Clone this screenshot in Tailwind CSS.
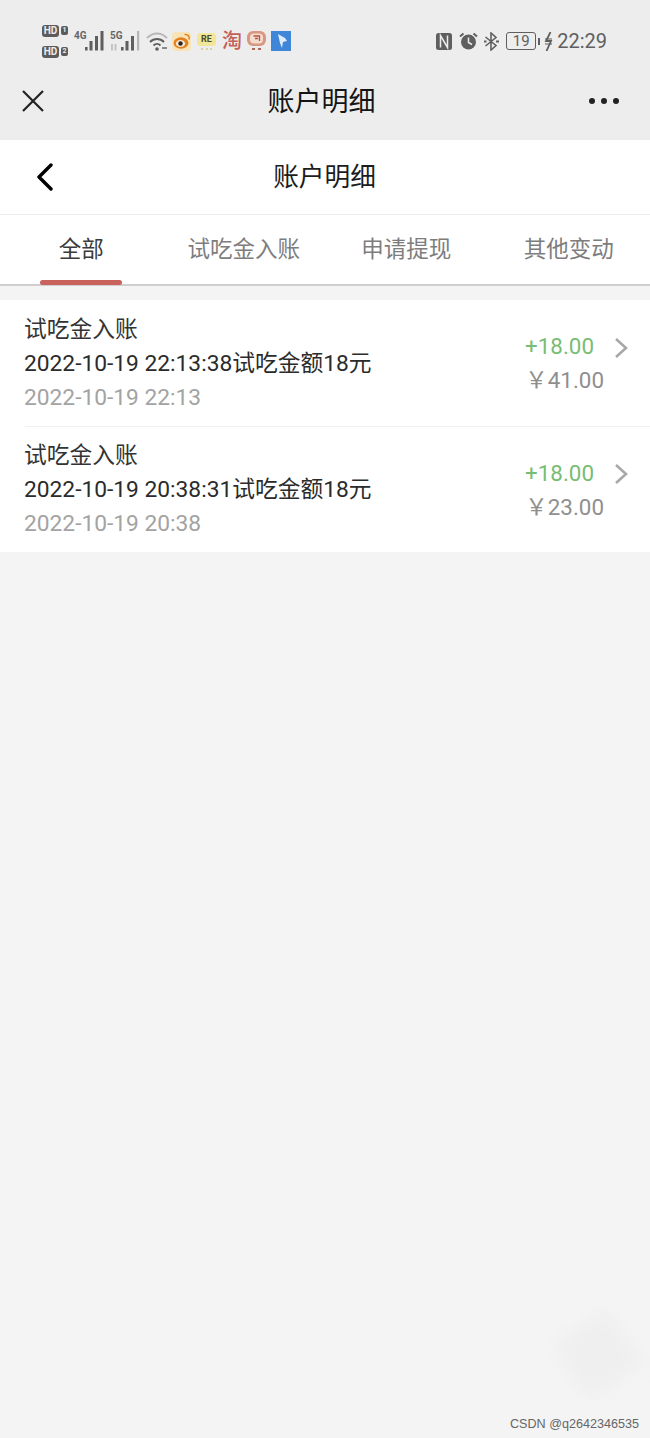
<!DOCTYPE html>
<html lang="zh-CN">
<head>
    <meta charset="UTF-8">
    <meta name="viewport" content="width=device-width, initial-scale=1.0">
    <title>账户明细</title>
    <script src="https://cdn.jsdelivr.net/npm/@tailwindcss/browser@4"></script>
</head>
<body class="relative h-[1438px] w-[650px] overflow-hidden bg-[#f4f4f4] font-['Roboto','Noto_Sans_CJK_SC',sans-serif]">
    <!-- 系统状态栏 + 微信标题栏 -->
    <header class="h-[140px] bg-[#ededed]">
        <div class="flex h-[62px] items-center pt-[20px] pl-[42px] pr-[43px] text-[#5f5f5f]">
            <!-- HD -->
            <div class="flex w-[32px] flex-col gap-[9px]">
                <div class="flex items-center gap-[2px]">
                    <span class="flex h-[12px] w-[17px] items-center justify-center rounded-[3px] bg-[#5c5c5c] text-[10px] leading-none font-bold text-[#eee]">HD</span>
                    <span class="flex h-[9px] w-[7px] items-center justify-center rounded-[2px] bg-[#5c5c5c] text-[7px] leading-none font-bold text-[#eee]">1</span>
                </div>
                <div class="flex items-center gap-[2px]">
                    <span class="flex h-[12px] w-[17px] items-center justify-center rounded-[3px] bg-[#5c5c5c] text-[10px] leading-none font-bold text-[#eee]">HD</span>
                    <span class="flex h-[9px] w-[7px] items-center justify-center rounded-[2px] bg-[#5c5c5c] text-[7px] leading-none font-bold text-[#eee]">2</span>
                </div>
            </div>
            <!-- 4G -->
            <div class="relative h-[22px] w-[36px]">
                <span class="absolute top-0 left-0 text-[10px] leading-[12px] font-bold text-[#666]">4G</span>
                <svg class="absolute top-0 left-0" width="36" height="22" viewBox="0 0 36 22" fill="#5f5f5f"><rect x="11" y="17" width="2.6" height="3.5"/><rect x="15.5" y="11" width="3" height="9.5"/><rect x="21" y="6" width="3" height="14.5"/><rect x="26.5" y="1" width="3" height="19.5"/></svg>
            </div>
            <!-- 5G -->
            <div class="relative h-[22px] w-[36px]">
                <span class="absolute top-0 left-0 text-[10px] leading-[12px] font-bold text-[#666]">5G</span>
                <svg class="absolute top-0 left-0" width="36" height="22" viewBox="0 0 36 22" fill="#5f5f5f"><rect x="1" y="14" width="2" height="6.5" fill="#c4c4c4"/><rect x="4.5" y="14" width="2" height="6.5" fill="#c4c4c4"/><rect x="11" y="17" width="2.6" height="3.5"/><rect x="15.5" y="11" width="3" height="9.5"/><rect x="21" y="6" width="3" height="14.5"/><rect x="27" y="1" width="2.2" height="19.5" fill="#b5b5b5"/></svg>
            </div>
            <!-- wifi -->
            <svg class="w-[26px]" width="26" height="20" viewBox="0 0 26 20" fill="none"><path d="M1 7 C 7 1, 15 1, 21 7" stroke="#b8b8b8" stroke-width="1.8"/><path d="M4 11 C 8 7, 14 7, 18 11" stroke="#5f5f5f" stroke-width="2"/><path d="M7.5 14.5 C 9.5 12.5, 12.5 12.5, 14.5 14.5" stroke="#5f5f5f" stroke-width="2"/><circle cx="11" cy="18" r="1.8" fill="#5f5f5f"/><path d="M16 17 h5" stroke="#5f5f5f" stroke-width="1.4"/></svg>
            <!-- 微博 -->
            <svg class="w-[25px]" width="25" height="20" viewBox="0 0 25 20"><rect width="19" height="19" y="1" rx="4" fill="#f8e4b8"/><ellipse cx="9" cy="12" rx="7.5" ry="5.8" fill="#e2811f"/><ellipse cx="8.5" cy="12.5" rx="4.6" ry="3.6" fill="#f6ead2"/><circle cx="8.5" cy="12.5" r="2.2" fill="#2c2420"/><path d="M12.5 3.5 C 16 3, 18 5.5, 17 8.5" stroke="#e2811f" stroke-width="1.6" fill="none"/></svg>
            <!-- 黄色图标 -->
            <div class="flex w-[25px] flex-col items-start">
                <span class="flex h-[13px] w-[19px] items-center justify-center rounded-[3px] bg-[#f1e69a] text-[9px] leading-none font-bold text-[#4a4a28]">RE</span>
                <span class="mt-[2px] ml-[4px] h-[2px] w-[11px] border-b-2 border-dotted border-[#d8d2a8]"></span>
            </div>
            <!-- 淘 -->
            <span class="w-[25px] text-[20px] leading-none font-medium text-[#c4605a]">淘</span>
            <!-- 红色活动图标 -->
            <svg class="w-[24px]" width="24" height="20" viewBox="0 0 24 20"><rect x="0" y="0" width="19" height="15" rx="6" fill="#d99680"/><rect x="3" y="2.5" width="13" height="10" rx="4" fill="#f4ddcf"/><path d="M6.5 5 h6 v5 M8 7.5 h3" stroke="#b5523d" stroke-width="1.3" fill="none"/><path d="M5 18 h3 M11 18 h3" stroke="#b06a58" stroke-width="2"/></svg>
            <!-- 蓝色图标 -->
            <svg width="20" height="20" viewBox="0 0 20 20"><rect width="20" height="20" fill="#3f85d8"/><path d="M7 3 L14 7 L16 10 L12 11 L11 17 L9 12 Z" fill="#dfeafa"/></svg>

            <div class="flex-1"></div>

            <!-- NFC -->
            <svg class="mr-[7px]" width="16" height="17" viewBox="0 0 16 17"><rect width="16" height="17" rx="2.5" fill="#5f5f5f"/><path d="M4.5 14.5 V2.5 L11.5 14.5 V2.5" stroke="#ededed" stroke-width="1.5" fill="none"/></svg>
            <!-- 闹钟 -->
            <svg class="mr-[6px]" width="19" height="18" viewBox="0 0 19 18"><circle cx="9.5" cy="10" r="7.5" fill="#5f5f5f"/><path d="M9.5 5.5 V10.5 L13 12.5" stroke="#ededed" stroke-width="1.5" fill="none"/><path d="M1 4.5 L4.5 1.5 M18 4.5 L14.5 1.5" stroke="#5f5f5f" stroke-width="2"/></svg>
            <!-- 蓝牙 -->
            <svg class="mr-[7px]" width="15" height="19" viewBox="0 0 15 19" fill="none" stroke="#5f5f5f" stroke-width="1.6"><path d="M1.5 5 L12 13.5 L7 18 V1 L12 5.5 L1.5 14"/><path d="M0 9.5 h2.5 M12 9.5 h3" stroke-width="2"/></svg>
            <!-- 电量 -->
            <span class="flex h-[18px] w-[30px] items-center justify-center rounded-[3px] border-[1.5px] border-[#5f5f5f] text-[15px] leading-none">19</span>
            <span class="mr-[4px] ml-[2px] h-[7px] w-[2px] bg-[#5f5f5f]"></span>
            <svg class="mr-[4px]" width="9" height="19" viewBox="0 0 9 19" fill="none" stroke="#5f5f5f"><path d="M6.5 0 L2 9 H7 L2.5 19" stroke-width="1.8"/><path d="M1 7 H8 M1 12 H8" stroke-width="1.2"/></svg>
            <span class="text-[20px] leading-none">22:29</span>
        </div>
        <div class="grid h-[78px] grid-cols-[1fr_auto_1fr] items-center pl-[21px] pr-[28px]">
            <svg width="24" height="24" viewBox="0 0 24 24" fill="none" stroke="#222" stroke-width="2.2"><path d="M2 2 L22 22 M22 2 L2 22"/></svg>
            <h1 class="pt-[2px] text-[27px] leading-none text-[#151515]">账户明细</h1>
            <div class="mr-[3px] flex items-center gap-[6px] justify-self-end">
                <span class="h-[6px] w-[6px] rounded-full bg-[#222]"></span>
                <span class="h-[6px] w-[6px] rounded-full bg-[#222]"></span>
                <span class="h-[6px] w-[6px] rounded-full bg-[#222]"></span>
            </div>
        </div>
    </header>

    <!-- 页面标题 -->
    <div class="grid h-[75px] grid-cols-[1fr_auto_1fr] items-center border-b border-[#ececec] bg-white pl-[36px] pr-[37px]">
        <svg width="18" height="28" viewBox="0 0 18 28" fill="none" stroke="#000" stroke-width="3.4" stroke-linecap="round" stroke-linejoin="round"><path d="M15 2 L3 14 L15 26"/></svg>
        <h2 class="pt-[2px] text-[25.7px] leading-none text-[#1c1c1c]">账户明细</h2>
        <div></div>
    </div>

    <!-- 分类 -->
    <nav class="grid h-[71px] grid-cols-4 border-b-[2px] border-[#cfcfcf] bg-white text-center text-[22.5px] text-[#7d7d7d]">
        <div class="relative flex items-center justify-center text-[#3a3a3a]">
            全部
            <span class="absolute bottom-[-1px] left-[40px] h-[5px] w-[82px] rounded-[3px] bg-[#c9615d]"></span>
        </div>
        <div class="flex items-center justify-center">试吃金入账</div>
        <div class="flex items-center justify-center">申请提现</div>
        <div class="flex items-center justify-center">其他变动</div>
    </nav>

    <!-- 明细列表 -->
    <ul class="mt-[14px] bg-white">
        <li class="flex h-[126px] items-center pr-[21px] pl-[24px]">
            <div class="flex-1 pt-[2px] text-[22.75px] leading-[34px]">
                <p class="text-[#333]">试吃金入账</p>
                <p class="text-[#2b2b2b]">2022-10-19 22:13:38试吃金额18元</p>
                <p class="text-[#a3a3a3]">2022-10-19 22:13</p>
            </div>
            <div class="flex flex-col items-end text-[22.4px] leading-[34px]">
                <span class="pr-[10px] text-[#77bd73]">+18.00</span>
                <span class="text-[#8f8f8f]">￥41.00</span>
            </div>
            <svg class="mb-[30px] ml-[9px]" width="16" height="22" viewBox="0 0 16 22" fill="none" stroke="#a8a8a8" stroke-width="2.6"><path d="M3 2 L13 11 L3 20"/></svg>
        </li>
        <li class="ml-[25px] border-t border-[#f1f1f1]"></li>
        <li class="flex h-[125px] items-center pr-[21px] pl-[24px]">
            <div class="flex-1 text-[22.75px] leading-[34px]">
                <p class="text-[#333]">试吃金入账</p>
                <p class="text-[#2b2b2b]">2022-10-19 20:38:31试吃金额18元</p>
                <p class="text-[#a3a3a3]">2022-10-19 20:38</p>
            </div>
            <div class="flex flex-col items-end text-[22.4px] leading-[34px]">
                <span class="pr-[10px] text-[#77bd73]">+18.00</span>
                <span class="text-[#8f8f8f]">￥23.00</span>
            </div>
            <svg class="mb-[32px] ml-[9px]" width="16" height="22" viewBox="0 0 16 22" fill="none" stroke="#a8a8a8" stroke-width="2.6"><path d="M3 2 L13 11 L3 20"/></svg>
        </li>
    </ul>

    <!-- 水印 -->
    <div class="absolute top-[1322px] left-[565px] h-[66px] w-[66px] rotate-[-35deg] bg-[#efefef] blur-[10px]"></div>
    <span class="absolute right-[11px] bottom-[6px] font-['Liberation_Sans',sans-serif] text-[12.6px] leading-[15px] text-[#666]">CSDN @q2642346535</span>
</body>
</html>
